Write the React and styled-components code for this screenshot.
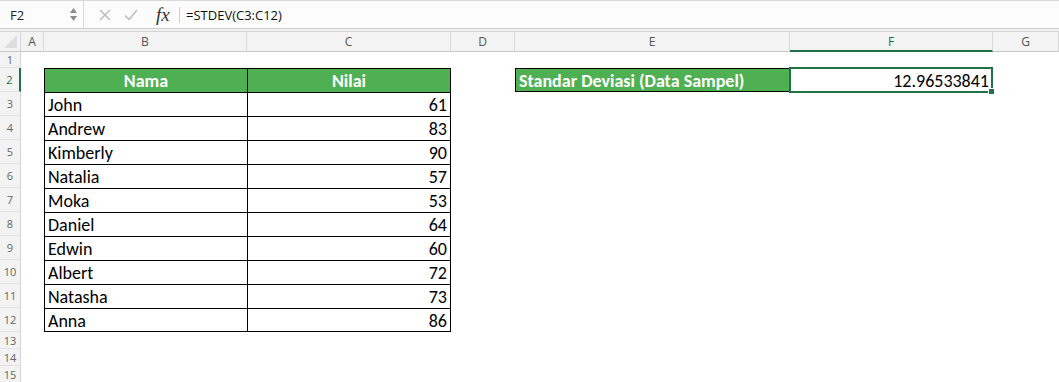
import React from "react";
import styled, { createGlobalStyle } from "styled-components";

const GlobalStyle = createGlobalStyle`
  html, body {
    margin: 0;
    padding: 0;
    background: #ffffff;
    overflow: hidden;
  }
`;

const columns = [
  { name: "A", width: "23px" },
  { name: "B", width: "203px" },
  { name: "C", width: "204px" },
  { name: "D", width: "64px" },
  { name: "E", width: "275px" },
  { name: "F", width: "203px" },
  { name: "G", width: "1fr" }
];

const rowHeights = [16, 24, 24, 24, 24, 24, 24, 24, 24, 24, 24, 24, 17, 17, 17];

const data = [
  ["John", 61],
  ["Andrew", 83],
  ["Kimberly", 90],
  ["Natalia", 57],
  ["Moka", 53],
  ["Daniel", 64],
  ["Edwin", 60],
  ["Albert", 72],
  ["Natasha", 73],
  ["Anna", 86]
];

const GREEN = "#4fb053";
const SELECT = "#217346";

const Page = styled.div`
  width: 1059px;
  height: 382px;
  display: flex;
  flex-direction: column;
  background: #f0f0f0;
  font-family: "Open Sans", "Liberation Sans", sans-serif;
`;

const FormulaBar = styled.div`
  height: 27px;
  display: flex;
  align-items: center;
  background: #fcfcfc;
  border-top: 1px solid #d9d9d9;
  border-bottom: 1px solid #cfcfcf;
  margin-bottom: 2px;
`;

const NameBox = styled.div`
  width: 84px;
  height: 100%;
  display: flex;
  align-items: center;
  justify-content: space-between;
  padding: 0 6px 0 10px;
  box-sizing: border-box;
  border-right: 1px solid #d6d6d6;
  font-size: 13px;
  color: #222;
`;

const Spinner = styled.div`
  display: flex;
  flex-direction: column;
  gap: 3px;
  color: #8a8a8a;
`;

const Tools = styled.div`
  width: 95px;
  height: 100%;
  display: flex;
  align-items: center;
  padding-left: 15px;
  gap: 13px;
  box-sizing: border-box;
`;

const Fx = styled.span`
  font-family: "Liberation Serif", "DejaVu Serif", serif;
  font-style: italic;
  font-size: 19px;
  color: #333;
  margin-left: 5px;
`;

const Divider = styled.div`
  width: 1px;
  height: 16px;
  background: #cfcfcf;
`;

const Formula = styled.div`
  padding-left: 6px;
  font-size: 13px;
  color: #111;
`;

const Sheet = styled.div`
  flex: 1;
  display: grid;
  grid-template-columns: 21px ${columns.map((c) => c.width).join(" ")};
  grid-template-rows: 21px ${rowHeights.map((h) => h + "px").join(" ")};
  background: #ffffff;
  overflow: hidden;
`;

const Corner = styled.div`
  position: relative;
  background: #f3f3f3;
  border-top: 1px solid #d4d4d4;
  border-right: 1px solid #d4d4d4;
  border-bottom: 1px solid #c8c8c8;
  box-sizing: border-box;
  &::after {
    content: "";
    position: absolute;
    right: 3px;
    bottom: 3px;
    border-style: solid;
    border-width: 0 0 13px 13px;
    border-color: transparent transparent #dedede transparent;
  }
`;

const ColHead = styled.div`
  display: flex;
  align-items: center;
  justify-content: center;
  background: #f3f3f3;
  border-top: 1px solid #d4d4d4;
  border-right: 1px solid #d9d9d9;
  border-bottom: ${(p) => (p.active ? `2px solid ${SELECT}` : "1px solid #c8c8c8")};
  box-sizing: border-box;
  font-size: 12px;
  color: ${(p) => (p.active ? SELECT : "#555")};
`;

const RowHead = styled.div`
  display: flex;
  align-items: center;
  justify-content: center;
  background: #f3f3f3;
  border-right: ${(p) => (p.active ? `2px solid ${SELECT}` : "1px solid #d4d4d4")};
  border-bottom: 1px solid #e2e2e2;
  box-sizing: border-box;
  font-size: 11px;
  color: ${(p) => (p.active ? SELECT : "#666")};
`;

const Cell = styled.div`
  position: relative;
  display: flex;
  align-items: center;
  justify-content: ${(p) => (p.align === "right" ? "flex-end" : p.align === "center" ? "center" : "flex-start")};
  padding: 1px 3px 0 3px;
  box-sizing: border-box;
  font-family: "Carlito", "Lato", sans-serif;
  font-size: 18px;
  font-weight: ${(p) => (p.bold ? 700 : 400)};
  color: ${(p) => (p.head ? "#ffffff" : "#000")};
  background: ${(p) => (p.head ? GREEN : "transparent")};
  border-top: ${(p) => (p.boxed ? "1px solid #000" : "none")};
  border-left: ${(p) => (p.boxed ? "1px solid #000" : "none")};
  border-right: ${(p) => (p.closeRight ? "1px solid #000" : "none")};
  border-bottom: ${(p) => (p.closeBottom ? "1px solid #000" : "none")};
  white-space: nowrap;
`;

const Selected = styled(Cell)`
  border: 2px solid ${SELECT};
  margin: -1px 0 -1px -1px;
  padding-right: 2px;
`;

const FillHandle = styled.span`
  position: absolute;
  right: -4px;
  bottom: -4px;
  width: 5px;
  height: 5px;
  background: ${SELECT};
  border: 1px solid #fff;
`;

const Tri = ({ up }) => (
  <svg width="7" height="5" viewBox="0 0 7 5">
    <path d={up ? "M0 5 L3.5 0 L7 5 Z" : "M0 0 L3.5 5 L7 0 Z"} fill="currentColor" />
  </svg>
);

const renderCell = (row, col) => {
  const key = `${row}-${col}`;
  // table B2:C12
  if ((col === "B" || col === "C") && row >= 2 && row <= 12) {
    const isHead = row === 2;
    const closeRight = col === "C";
    const closeBottom = row === 12;
    if (isHead) {
      return (
        <Cell key={key} boxed head bold align="center" closeRight={closeRight}>
          {col === "B" ? "Nama" : "Nilai"}
        </Cell>
      );
    }
    const [name, value] = data[row - 3];
    return (
      <Cell key={key} boxed align={col === "C" ? "right" : "left"} closeRight={closeRight} closeBottom={closeBottom}>
        {col === "B" ? name : value}
      </Cell>
    );
  }
  if (col === "E" && row === 2) {
    return (
      <Cell key={key} boxed head bold closeBottom>
        Standar Deviasi (Data Sampel)
      </Cell>
    );
  }
  if (col === "F" && row === 2) {
    return (
      <Selected key={key} align="right">
        12.96533841
        <FillHandle />
      </Selected>
    );
  }
  return <Cell key={key} />;
};

const App = () => {
  return (
    <Page>
      <GlobalStyle />
      <FormulaBar>
        <NameBox>
          F2
          <Spinner>
            <Tri up />
            <Tri />
          </Spinner>
        </NameBox>
        <Tools>
          <svg width="12" height="12" viewBox="0 0 12 12">
            <path d="M1 1 L11 11 M11 1 L1 11" stroke="#b9b9b9" strokeWidth="1.4" fill="none" />
          </svg>
          <svg width="14" height="12" viewBox="0 0 14 12">
            <path d="M1 6.5 L5 10.5 L13 1" stroke="#b9b9b9" strokeWidth="1.4" fill="none" />
          </svg>
          <Fx>fx</Fx>
        </Tools>
        <Divider />
        <Formula>=STDEV(C3:C12)</Formula>
      </FormulaBar>
      <Sheet>
        <Corner />
        {columns.map((c) => (
          <ColHead key={c.name} active={c.name === "F"}>
            {c.name}
          </ColHead>
        ))}
        {rowHeights.map((h, i) => {
          const row = i + 1;
          return (
            <React.Fragment key={row}>
              <RowHead active={row === 2}>{row}</RowHead>
              {columns.map((c) => renderCell(row, c.name))}
            </React.Fragment>
          );
        })}
      </Sheet>
    </Page>
  );
};

export default App;
